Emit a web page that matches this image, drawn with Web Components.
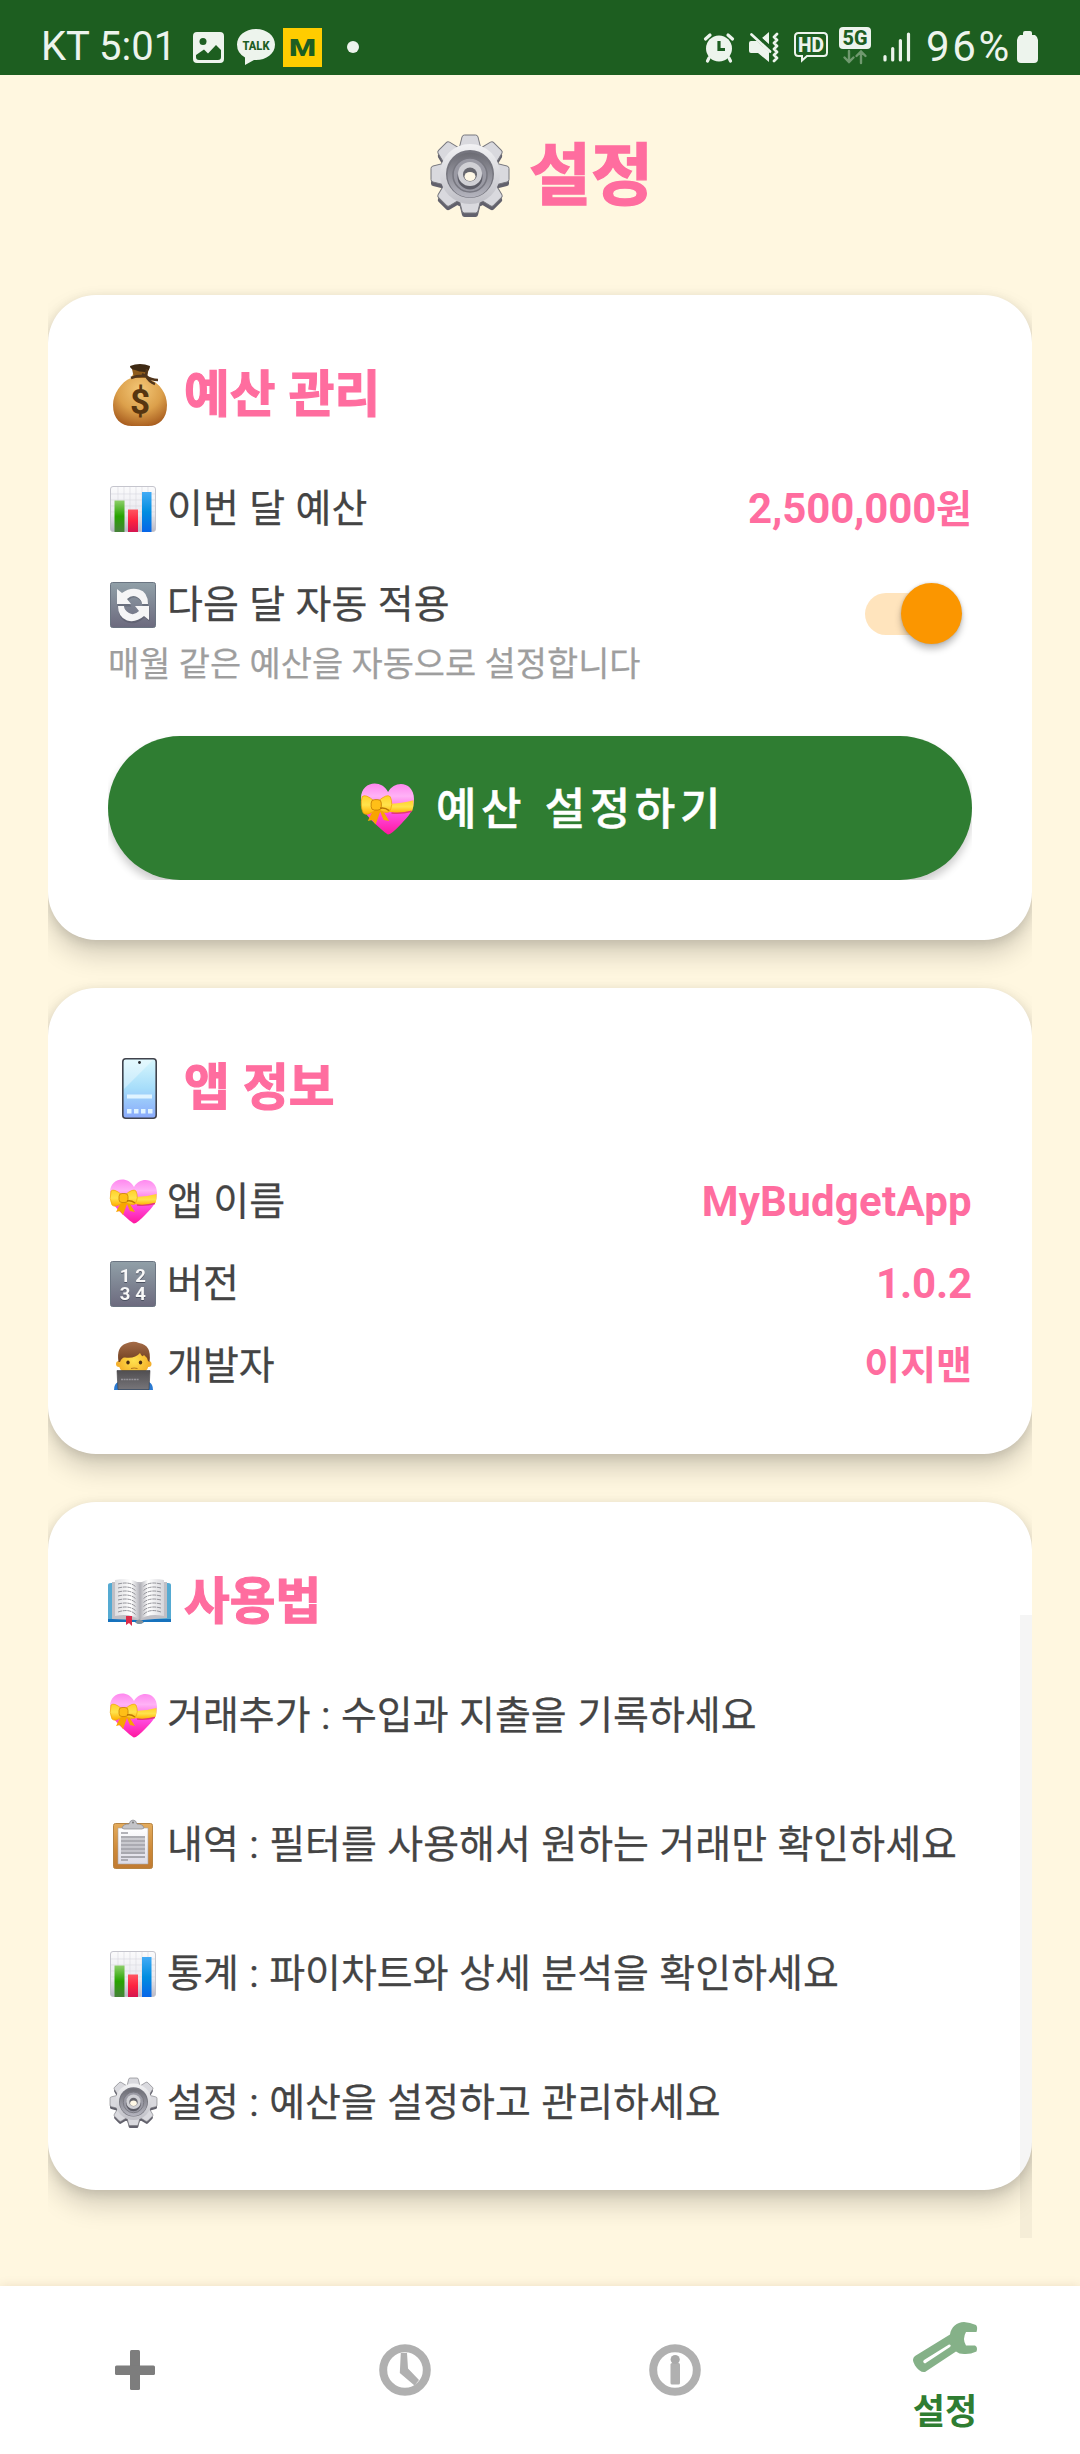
<!DOCTYPE html>
<html lang="ko">
<head>
<meta charset="utf-8">
<title>설정</title>
<style>
html,body{margin:0;padding:0}
body{background:#fff7e0;font-family:Roboto,"Noto Sans CJK KR",sans-serif;color:#444}
</style>
</head>
<body>
<settings-screen></settings-screen>
<script>
const turn = (n, s, cx, cy) => Array.from({length:n}, (_, i) => `<g transform="rotate(${i*360/n} ${cx} ${cy})">${s}</g>`).join('');
const tooth = '<path d="M28 14L31 2Q31.500 0 33.500 0H44.500Q46.500 0 47 2L50 14z"/>';
const bars = [13,17,21,25,29,33].map(y => `<path d="M12 ${y}h24"/>`).join('');

const ART = {
  gear: ['0 0 78 82', `<defs><linearGradient id="a" x2="0" y2="1"><stop stop-color="#f2f2f4"/><stop offset="1" stop-color="#bfbfc6"/></linearGradient><linearGradient id="b" x2="0" y2="1"><stop stop-color="#6c6c74"/><stop offset="1" stop-color="#b4b4be"/></linearGradient></defs>
    <g fill="#62616c" transform="translate(0 4)">${turn(8,tooth,39,39)}<circle cx="39" cy="39" r="30"/></g>
    <g fill="#d9d9de" stroke="#77777d" stroke-width="1">${turn(8,tooth,39,39)}</g><circle cx="39" cy="39" r="30" fill="url(#a)"/>
    <circle cx="39" cy="39" r="24" fill="#75757e"/><circle cx="39" cy="40" r="22.500" fill="url(#b)"/><circle cx="39" cy="40" r="17" fill="#9a9aa4" stroke="#777780" stroke-width="1.500"/>
    <circle cx="39" cy="42" r="12.500" fill="#5d5d67"/><circle cx="39" cy="39" r="12" fill="#d0d0d5"/><circle cx="39" cy="39.500" r="7" fill="#66666e"/><ellipse cx="39" cy="41.500" rx="5.500" ry="4.500" fill="#fff8e6"/>`],
  bag: ['0 0 54 62', `<defs><radialGradient id="a" cx=".5" cy=".3" r=".75"><stop stop-color="#f3c777"/><stop offset=".55" stop-color="#dca04b"/><stop offset="1" stop-color="#a5591c"/></radialGradient></defs>
    <path d="M20 10h14l2 5C47 19 54 30 54 41C54 55 46 62 35 62H19C8 62 0 55 0 41C0 30 8 18 18 14z" fill="url(#a)"/>
    <path d="M19 5h17l-3 9H21z" fill="#8f5c1c"/><path d="M17 2Q27-2 37 2Q37 7 32 8Q26 8 22 6Q17 5 17 2z" fill="#3e2913"/>
    <path d="M18 14Q25 11 34 12M34 5L33 12Q38 16 45 16M33 12Q36 18 42 20M33 12L29 10" fill="none" stroke="#51351b" stroke-width="2.500"/>
    <text x="27" y="50" text-anchor="middle" font-family="Roboto" font-weight="700" font-size="35" fill="#573510">$</text>`],
  chart: ['0 0 46 46', `<defs><linearGradient id="z" x2="0" y2="1"><stop stop-color="#fbfbfc"/><stop offset=".6" stop-color="#e9e9ef"/><stop offset="1" stop-color="#b9b9c6"/></linearGradient><linearGradient id="g" x2="0" y2="1"><stop stop-color="#8dcf69"/><stop offset=".5" stop-color="#27a300"/><stop offset="1" stop-color="#46813a"/></linearGradient><linearGradient id="r" x2="0" y2="1"><stop stop-color="#ff5560"/><stop offset=".5" stop-color="#fd2441"/><stop offset="1" stop-color="#d41550"/></linearGradient><linearGradient id="b" x2="0" y2="1"><stop stop-color="#43abf5"/><stop offset=".5" stop-color="#008de0"/><stop offset="1" stop-color="#0765e8"/></linearGradient></defs>
    <rect x=".5" y=".5" width="45" height="45" rx="2.500" fill="url(#z)" stroke="#c5c5cd"/>
    <path d="M8 1v44M14 1v44M20 1v44M26 1v44M32 1v44M38 1v44M1 8h44M1 14h44M1 20h44M1 26h44M1 32h44" stroke="#d8d8df" stroke-width=".6"/>
    <path d="M4.500 14.500h10V46h-10z" fill="url(#g)"/><path d="M18 23.500h10V46H18z" fill="url(#r)"/><path d="M32 6h9.500v40H32z" fill="url(#b)"/>`],
  refresh: ['0 0 46 46', `<defs><linearGradient id="z" x2="0" y2="1"><stop stop-color="#91a0a8"/><stop offset="1" stop-color="#6c6a7e"/></linearGradient></defs>
    <rect x=".5" y=".5" width="45" height="45" rx="2" fill="url(#z)" stroke="#6b7582"/>
    <g fill="#454956" opacity=".35" transform="translate(.5 1.500)"><path d="M7 8V23H21L17 18Q22 12 27 15Q32 18 32 23H38Q38 11 29 8Q20 4 12 12z"/><path d="M39 38V23H25L29 28Q24 34 19 31Q14 28 14 25H8Q8 36 17 39Q26 42 34 34z"/></g>
    <g fill="#f5f5f6"><path d="M7 7V22H21L17 17Q22 12 27 15Q32 18 32 22H38Q38 10 29 7.500Q20 5 12 11z"/><path d="M39 38V24H25L29 29Q24 34 19 31Q14 28 14 24H8Q8 35 17 38.500Q26 41 34 34z"/></g>`],
  heart: ['0 0 47 44', `<defs><linearGradient id="h" x2="0" y2="1"><stop stop-color="#ff87ef"/><stop offset=".25" stop-color="#ffb2f6"/><stop offset=".45" stop-color="#ff76e6"/><stop offset=".6" stop-color="#ff4ce0"/><stop offset="1" stop-color="#ff179f"/></linearGradient><linearGradient id="y" x2="0" y2="1"><stop stop-color="#ffd12b"/><stop offset=".5" stop-color="#ffe34c"/><stop offset="1" stop-color="#ffae00"/></linearGradient></defs>
    <path d="M24 43.500Q22 43 9 31Q0 22 0 12C0-2 18-5 24 7C30-4 47-2 47 13C47 23 42 28 36 34Q27 43.500 24 43.500z" fill="url(#h)"/>
    <path d="M25 17Q36 17 46.500 14Q47 19 45.500 23Q35 27 25 24z" fill="url(#y)"/><path d="M27 25Q36 26 45 23.500" fill="none" stroke="#e2387a" stroke-width="1.300"/>
    <path d="M12 20L6 32L10 31L13 35L17 24L20 31L25 32L18 21z" fill="#f8a500"/>
    <path d="M12 15Q4 8 1 11Q-1 19 2 25Q5 28 12 23zM15 15Q23 8 26 11Q29 18 25 24Q21 26 14 21z" fill="url(#y)" stroke="#efa70b" stroke-width=".7"/>
    <rect x="9" y="13.500" width="9" height="9" rx="3" fill="#ffbf17" stroke="#c98106" stroke-width=".8"/><path d="M17 21Q21 20 25 23" stroke="#ba7505" stroke-width="1.400" fill="none"/>`],
  phone: ['0 0 35 61', `<defs><linearGradient id="a" x2="0" y2="1"><stop stop-color="#d8f7fd"/><stop offset=".5" stop-color="#a6ddfa"/><stop offset="1" stop-color="#89a9fb"/></linearGradient></defs>
    <rect x=".8" y=".8" width="33.400" height="59.400" rx="3" fill="url(#a)" stroke="#41434c" stroke-width="1.600"/><path d="M2 2H31L2 31z" fill="#fff" opacity=".35"/><circle cx="17.500" cy="4.500" r="1.400" fill="#26272b"/>
    <path d="M5 36.500h25v4H5zM5 51h4.500v4.500H5zM12 51h4.500v4.500H12zM19 51h4.500v4.500H19zM26 51h4.500v4.500H26z" fill="#e0f4ff"/>`],
  numbers: ['0 0 46 46', `<defs><linearGradient id="z" x2="0" y2="1"><stop stop-color="#91a0a8"/><stop offset="1" stop-color="#6c6a7e"/></linearGradient></defs>
    <rect x=".5" y=".5" width="45" height="45" rx="2" fill="url(#z)" stroke="#6b7582"/>
    <g style="filter:drop-shadow(.5px 1px 0 #4b5060)" font-family="Roboto" font-weight="700" font-size="18.500" text-anchor="middle" fill="#f8f8f8"><text x="15" y="20.500">1</text><text x="30.500" y="20.500">2</text><text x="15" y="38.500">3</text><text x="30.500" y="38.500">4</text></g>`],
  coder: ['0 0 39 48', `<defs><radialGradient id="f" cx=".5" cy=".5" r=".55"><stop stop-color="#ffe24f"/><stop offset="1" stop-color="#f6b32a"/></radialGradient><linearGradient id="l" x2="0" y2="1"><stop stop-color="#504e51"/><stop offset="1" stop-color="#777579"/></linearGradient><linearGradient id="k" x2="0" y2="1"><stop stop-color="#a56c47"/><stop offset="1" stop-color="#6f3f20"/></linearGradient></defs>
    <path d="M0 48Q0 42 4 40H35Q39 42 39 48z" fill="#2a7ad2"/><circle cx="5" cy="22" r="3" fill="#f4b02d"/><circle cx="34.500" cy="22" r="3" fill="#f4b02d"/>
    <path d="M5 14Q5 5 20 5T34.500 14V23Q34 32 20 32Q5.500 32 5 23z" fill="url(#f)"/>
    <path d="M4.500 20Q2 5 12 1.500Q19-1.500 25 1Q38 3 35.500 20L34 19Q33 15 30 13Q28 16 26 11Q21 17 11 15.500Q8 15 6 20z" fill="url(#k)"/>
    <ellipse cx="14" cy="20.500" rx="1.700" ry="2.100" fill="#4b2c13"/><ellipse cx="26.500" cy="20.500" rx="1.700" ry="2.100" fill="#4b2c13"/><path d="M17 26.500Q20 25.500 23.500 26.500" stroke="#b5761c" fill="none"/>
    <path d="M3 28.500h33l-1 19H4z" fill="url(#l)" stroke="#403e41" stroke-width=".6"/><path d="M7 37.500h18" stroke="#96949a" stroke-width="1.500" stroke-dasharray="2 .6"/>`],
  book: ['0 0 63 47', `<defs><linearGradient id="a"><stop stop-color="#dedee1"/><stop offset=".65" stop-color="#fff"/><stop offset="1" stop-color="#b6b6bd"/></linearGradient><linearGradient id="b"><stop stop-color="#a9a9b0"/><stop offset=".35" stop-color="#fff"/><stop offset="1" stop-color="#d6d6db"/></linearGradient></defs>
    <path d="M0 6Q0 4 3 4H60Q63 4 63 6V43H36Q31 46 27 43H0z" fill="#55aad2"/><path d="M0 40H63V43H36Q31 46 27 43H0z" fill="#1672bd"/>
    <path d="M4 3H59V39L35 41H28L4 40z" fill="#c0bfc5"/><path d="M7 1Q24-2 31.500 5V41Q23 34 7 37z" fill="url(#a)"/><path d="M56 1Q39-2 31.500 5V41Q40 34 56 37z" fill="url(#b)"/>
    <g fill="none" stroke="#898990" stroke-width=".9" stroke-dasharray="4 .7"><path d="M10 5Q22 2 28 8M10 9Q22 6 28 12M10 13Q22 10 28 16M10 17Q22 14 28 20M10 21Q22 18 28 24M10 25Q22 22 28 28M10 29Q22 26 28 32M10 33Q22 29 28 36M53 5Q41 2 35 8M53 9Q41 6 35 12M53 13Q41 10 35 16M53 17Q41 14 35 20M53 21Q41 18 35 24M53 25Q41 22 35 28M53 29Q41 26 35 32M53 33Q41 29 35 36"/></g>
    <path d="M18 37H24V47L21 44L18 46z" fill="#dc2b4a"/><path d="M28 42Q31 39 35 42V44Q31 46 28 44z" fill="#84919b"/>`],
  clipboard: ['0 0 40 49', `<defs><linearGradient id="a" x2="0" y2="1"><stop stop-color="#e4ac5d"/><stop offset=".6" stop-color="#cd8837"/><stop offset="1" stop-color="#c07a32"/></linearGradient><linearGradient id="p" x2="0" y2="1"><stop stop-color="#fff"/><stop offset="1" stop-color="#dcdbe6"/></linearGradient></defs>
    <rect x=".5" y="3.500" width="39" height="45" rx="2" fill="url(#a)" stroke="#b78442"/><path d="M5 8H35V44H5z" fill="url(#p)" stroke="#a9a5a5" stroke-width=".6"/>
    <path d="M9 8Q10 4 16 4Q17 0 20 0T24 4Q30 4 31 8L29 9H11z" fill="#c3c3c7" stroke="#88888e" stroke-width=".7"/><circle cx="20" cy="2.500" r="1" fill="#777"/>
    <path d="M8 13h7M8 40h7" stroke="#9c9ca2" stroke-width="1.500"/><g transform="translate(-4 4)" stroke="#8d8d94" stroke-width="1.400">${bars}<path d="M12 15h24M12 19h24M12 23h24M12 27h24" stroke-width=".8"/></g>`],

  image: ['0 0 31 31', `<path fill-rule="evenodd" d="M4 0H27Q31 0 31 4V27Q31 31 27 31H4Q0 31 0 27V4Q0 0 4 0zM3 25Q3 28 6 28H25Q28 28 28 25V18L23 13L15 21.500L11 17.500L3 23z" fill="#edf4ed"/><circle cx="10" cy="9.500" r="3.500" fill="#1d5e22"/>`],
  talk: ['0 0 38 36', `<path d="M19 0C30 0 38 7 38 15.500C38 25 29 31 19 31H17L8 36V28.500Q0 24 0 15.500C0 7 8 0 19 0z" fill="#edf4ed"/><text x="19" y="20.500" text-anchor="middle" textLength="27" lengthAdjust="spacingAndGlyphs" font-family="Roboto" font-weight="800" font-size="13" fill="#1d5e22">TALK</text>`],
  m: ['0 0 39 39', `<path d="M0 0H39V39H0z" fill="#ffcc00"/><text x="19.500" y="28" text-anchor="middle" textLength="27" lengthAdjust="spacingAndGlyphs" font-family="Roboto" font-weight="900" font-size="24" fill="#1d5e22">M</text>`],
  alarm: ['0 0 30 29', `<circle cx="15" cy="15.500" r="13" fill="#edf4ed"/><path d="M5 25L3.500 28M25 25L26.500 28M1.500 6L6 2M28.500 6L24 2" stroke="#edf4ed" stroke-width="3.200" stroke-linecap="round"/><path d="M15 8v8.500h6" fill="none" stroke="#1d5e22" stroke-width="3.200"/>`],
  mute: ['0 0 30 30', `<path d="M20 0V13L13 6zM2 9H8L20 20V30L9 21H2Q0 21 0 19V11Q0 9 2 9z" fill="#edf4ed"/><path d="M3 1L21.500 17.500" stroke="#1d5e22" stroke-width="2.500" transform="translate(1.200 -1.200)"/><path d="M2.500 2.500L21 19.500M28 2L25 5L28 8L25 11L28 14L25 17L28 20L25 23L28 26L25 29" fill="none" stroke="#edf4ed" stroke-width="2.700" stroke-linecap="round" stroke-linejoin="round"/>`],
  hd: ['0 0 34 30', `<path d="M4.500 1H29.500Q33 1 33 4.500V20.500Q33 24 29.500 24H13L8 28.500V24H4.500Q1 24 1 20.500V4.500Q1 1 4.500 1z" fill="none" stroke="#edf4ed" stroke-width="2"/><text x="17" y="19.500" text-anchor="middle" textLength="26" lengthAdjust="spacingAndGlyphs" font-family="Roboto" font-weight="800" font-size="20" fill="#edf4ed">HD</text>`],
  fiveg: ['0 0 32 37', `<rect width="32" height="22" rx="4" fill="#edf4ed"/><text x="16" y="18" text-anchor="middle" textLength="25" lengthAdjust="spacingAndGlyphs" font-family="Roboto" font-weight="800" font-size="20.500" fill="#1d5e22">5G</text><path d="M10 24V35M5.500 30.500L10 35L14.500 30.500M22 36V24.500M17.500 29L22 24.500L26.500 29" fill="none" stroke="#70996f" stroke-width="2.400" stroke-linecap="round"/>`],
  signal: ['0 0 28 30', `<path d="M2 24.500V28M9.700 16.500V28M17.400 8.500V28M25.500 2V28" stroke="#edf4ed" stroke-width="3.200" stroke-linecap="round"/>`],
  battery: ['0 0 21 32', `<path d="M6 2Q6 0 8 0H13Q15 0 15 2V4H18Q21 6 21 9V28Q21 32 17 32H4Q0 32 0 28V9Q0 6 3 4H6z" fill="#edf4ed"/>`],

  plus: ['0 0 40 40', `<g fill="#7d7d7d"><rect x="15" width="10" height="40" rx="1.500"/><rect y="15.500" width="40" height="9.500" rx="1.500"/></g>`],
  clock: ['0 0 52 52', `<circle cx="26" cy="26" r="21.800" fill="none" stroke="#b0b0b0" stroke-width="8"/><path d="M21.800 9H28L29 24.500L40 36L35.500 41.500L20.800 29z" fill="#b0b0b0"/>`],
  info: ['0 0 52 52', `<circle cx="26" cy="26" r="21.800" fill="none" stroke="#b0b0b0" stroke-width="8"/><rect x="21.500" y="19" width="9.500" height="21.500" rx="1.500" fill="#b0b0b0"/><circle cx="26.200" cy="15.500" r="4.600" fill="#a9a9a9"/>`],
  wrench: ['0 0 64 50', `<path fill-rule="evenodd" d="M2 34L37 12.500C38 5 44 0 51 0Q57 .5 63 3Q65 5 63.500 10H53Q49 17 53 23.500H62Q65 25 63.500 29.500Q57 32.500 51 32Q46 32 43 29.500L12 50Q7 51 2 43.500Q-2 37 2 34zM11 38Q9 40 12 41.500L37 25Q39 23 36 22.500z" fill="#85b188"/>`]
};

const define = (tag, html) => customElements.define(tag, class extends HTMLElement {
  constructor() {
    super();
    const t = document.createElement('template');
    t.innerHTML = html;
    this.attachShadow({mode:'open'}).append(t.content.cloneNode(true));
  }
});

customElements.define('ui-icon', class extends HTMLElement {
  connectedCallback() {
    if (this.shadowRoot) return;
    const [box, art] = ART[this.getAttribute('name')];
    const [, , bw, bh] = box.split(' ');
    const w = this.getAttribute('w') || bw, h = this.getAttribute('h') || bh;
    this.attachShadow({mode:'open'}).innerHTML =
      `<style>:host{display:block;flex:none;-webkit-text-stroke:0}svg{display:block;overflow:visible}</style><svg width="${w}" height="${h}" viewBox="${box}" preserveAspectRatio="none">${art}</svg>`;
  }
});

define('status-bar', `<style>
  :host{display:flex;justify-content:space-between;align-items:center;height:75px;box-sizing:border-box;padding:19px 42px 0 41px;background:#1d5e20;color:#edf4ed;font-size:40px;line-height:56px}
  div{display:flex;align-items:center}
  .time{width:152px;white-space:nowrap;letter-spacing:0}
  .dot{width:12px;height:12px;border-radius:50%;background:#edf4ed;margin-left:25px}
  .talk{margin-left:13px}.m{margin-left:8px}
  .r{gap:15px}.pct{width:84px;white-space:nowrap;font-size:42px;letter-spacing:2.600px}
  </style>
  <div><span class="time">KT 5:01</span><ui-icon name="image"></ui-icon><ui-icon class="talk" name="talk"></ui-icon><ui-icon class="m" name="m"></ui-icon><span class="dot"></span></div>
  <div class="r"><ui-icon name="alarm"></ui-icon><ui-icon name="mute"></ui-icon><ui-icon name="hd"></ui-icon><ui-icon name="fiveg" style="margin:-4px -3px 0 -4px"></ui-icon><ui-icon name="signal"></ui-icon><span class="pct">96%</span><ui-icon name="battery" style="margin-left:-8px"></ui-icon></div>`);

define('page-title', `<style>
  :host{display:flex;justify-content:center;align-items:center;gap:20px;height:220px;box-sizing:border-box;padding:0 0 18px 4px;color:#ff6d9f;font-size:67.500px;font-weight:700;line-height:90px;-webkit-text-stroke:1.400px #ff6d9f}
  </style><ui-icon name="gear"></ui-icon><span><slot></slot></span>`);

define('settings-card', `<style>
  :host{display:block;box-sizing:border-box;padding:61px 60px var(--end,60px);border-radius:48px;background:#fff;box-shadow:0 15px 26px rgba(0,0,0,.17),0 3px 12px rgba(0,0,0,.12)}
  header{display:flex;align-items:center;height:78px;margin-bottom:var(--gap,34px);color:#ff6d9f;font-size:49.700px;font-weight:700;line-height:80px;word-spacing:1px;-webkit-text-stroke:1.200px #ff6d9f}
  .icon{display:flex;width:63px;justify-content:center;margin-right:13px}
  </style><header><span class="icon"><slot name="icon"></slot></span><slot name="title"></slot></header><slot></slot>`);

define('info-row', `<style>
  :host{display:flex;justify-content:space-between;align-items:center;height:var(--row,82px);font-size:39px;line-height:60px;white-space:nowrap;word-spacing:.8px}
  .label{display:flex;align-items:center;-webkit-text-stroke:.25px}
  .icon{display:flex;justify-content:center;width:50px;margin-right:9px}
  .value{color:#ff6d9f;font-weight:700;word-spacing:0}
  </style><span class="label"><span class="icon"><slot name="icon"></slot></span><slot></slot></span><span class="value"><slot name="value"></slot></span>`);

define('toggle-switch', `<style>
  :host{display:flex;align-items:center;width:97px;height:61px}
  .track{display:flex;align-items:center;justify-content:flex-end;width:82px;height:42px;border-radius:21px;background:#ffe4bd}
  .thumb{flex:none;width:61px;height:61px;margin-right:-15px;border-radius:50%;background:#fb9600;box-shadow:0 5px 7px rgba(0,0,0,.26),0 0 3px rgba(0,0,0,.16)}
  </style><div class="track"><div class="thumb"></div></div>`);

define('auto-apply', `<style>
  :host{display:flex;justify-content:space-between;height:186px;box-sizing:border-box;padding-top:25px}
  info-row{--row:60px}
  .note{font-size:33.900px;line-height:60px;color:#9e9e9e;white-space:nowrap;-webkit-text-stroke:.25px}
  toggle-switch{margin:8px 10px 0 0}
  </style><div><info-row><ui-icon slot="icon" name="refresh"></ui-icon>다음 달 자동 적용</info-row><div class="note">매월 같은 예산을 자동으로 설정합니다</div></div><toggle-switch></toggle-switch>`);

define('pill-button', `<style>
  :host{display:flex;justify-content:center;align-items:center;height:144px;box-sizing:border-box;padding:3px 0 0 6px;border-radius:72px;background:#2f7d32;color:#fff;font-size:44px;font-weight:500;letter-spacing:4.600px;word-spacing:3px;line-height:70px;-webkit-text-stroke:.5px;box-shadow:0 6px 8px rgba(0,0,0,.2);clip-path:inset(-6px 0 0 0)}
  span{margin-left:22px}
  </style><ui-icon name="heart" w="53" h="51"></ui-icon><span><slot></slot></span>`);

define('nav-item', `<style>
  :host{display:flex;flex:1;flex-direction:column;align-items:center;justify-content:center;color:#2f7d32;font-size:35px;font-weight:700;line-height:44px}
  </style><slot name="icon"></slot><slot></slot>`);

define('bottom-nav', `<style>
  :host{display:flex;height:168px;background:#fff;box-shadow:0 0 10px rgba(120,60,0,.13)}
  .on{margin:16px 0 19px}
  </style>
  <nav-item><ui-icon slot="icon" name="plus"></ui-icon></nav-item>
  <nav-item><ui-icon slot="icon" name="clock"></ui-icon></nav-item>
  <nav-item><ui-icon slot="icon" name="info"></ui-icon></nav-item>
  <nav-item><ui-icon slot="icon" name="wrench" class="on"></ui-icon>설정</nav-item>`);

define('settings-screen', `<style>
  :host{display:flex;flex-direction:column;width:1080px;height:2454px;overflow:hidden;background:#fff7e0}
  main{position:relative;flex:1;display:flex;flex-direction:column;gap:48px;margin:0 48px;clip-path:inset(-40px 0 0 0)}
  .scroll{position:absolute;right:0;top:1320px;width:12px;height:623px;background:rgba(0,0,0,.04)}
  .budget{height:645px}.about{height:466px;--end:47px}.guide{height:688px;--gap:10px;--row:129px;--end:23px}
  .num{font-size:42px;letter-spacing:-.15px}.latin{font-size:42px;letter-spacing:.25px}
  </style>
  <status-bar></status-bar>
  <page-title>설정</page-title>
  <main>
    <settings-card class="budget"><ui-icon slot="icon" name="bag"></ui-icon><span slot="title">예산 관리</span>
      <info-row><ui-icon slot="icon" name="chart"></ui-icon>이번 달 예산<span slot="value"><span class="num">2,500,000</span>원</span></info-row>
      <auto-apply></auto-apply>
      <pill-button>예산 설정하기</pill-button>
    </settings-card>
    <settings-card class="about"><ui-icon slot="icon" name="phone"></ui-icon><span slot="title">앱 정보</span>
      <info-row><ui-icon slot="icon" name="heart"></ui-icon>앱 이름<span slot="value" class="latin">MyBudgetApp</span></info-row>
      <info-row><ui-icon slot="icon" name="numbers"></ui-icon>버전<span slot="value" class="num">1.0.2</span></info-row>
      <info-row><ui-icon slot="icon" name="coder"></ui-icon>개발자<span slot="value">이지맨</span></info-row>
    </settings-card>
    <settings-card class="guide"><ui-icon slot="icon" name="book"></ui-icon><span slot="title">사용법</span>
      <info-row><ui-icon slot="icon" name="heart"></ui-icon>거래추가 : 수입과 지출을 기록하세요</info-row>
      <info-row><ui-icon slot="icon" name="clipboard"></ui-icon>내역 : 필터를 사용해서 원하는 거래만 확인하세요</info-row>
      <info-row><ui-icon slot="icon" name="chart"></ui-icon>통계 : 파이차트와 상세 분석을 확인하세요</info-row>
      <info-row><ui-icon slot="icon" name="gear" w="47" h="50"></ui-icon>설정 : 예산을 설정하고 관리하세요</info-row>
    </settings-card>
    <div class="scroll"></div>
  </main>
  <bottom-nav></bottom-nav>`);
</script>
</body>
</html>
